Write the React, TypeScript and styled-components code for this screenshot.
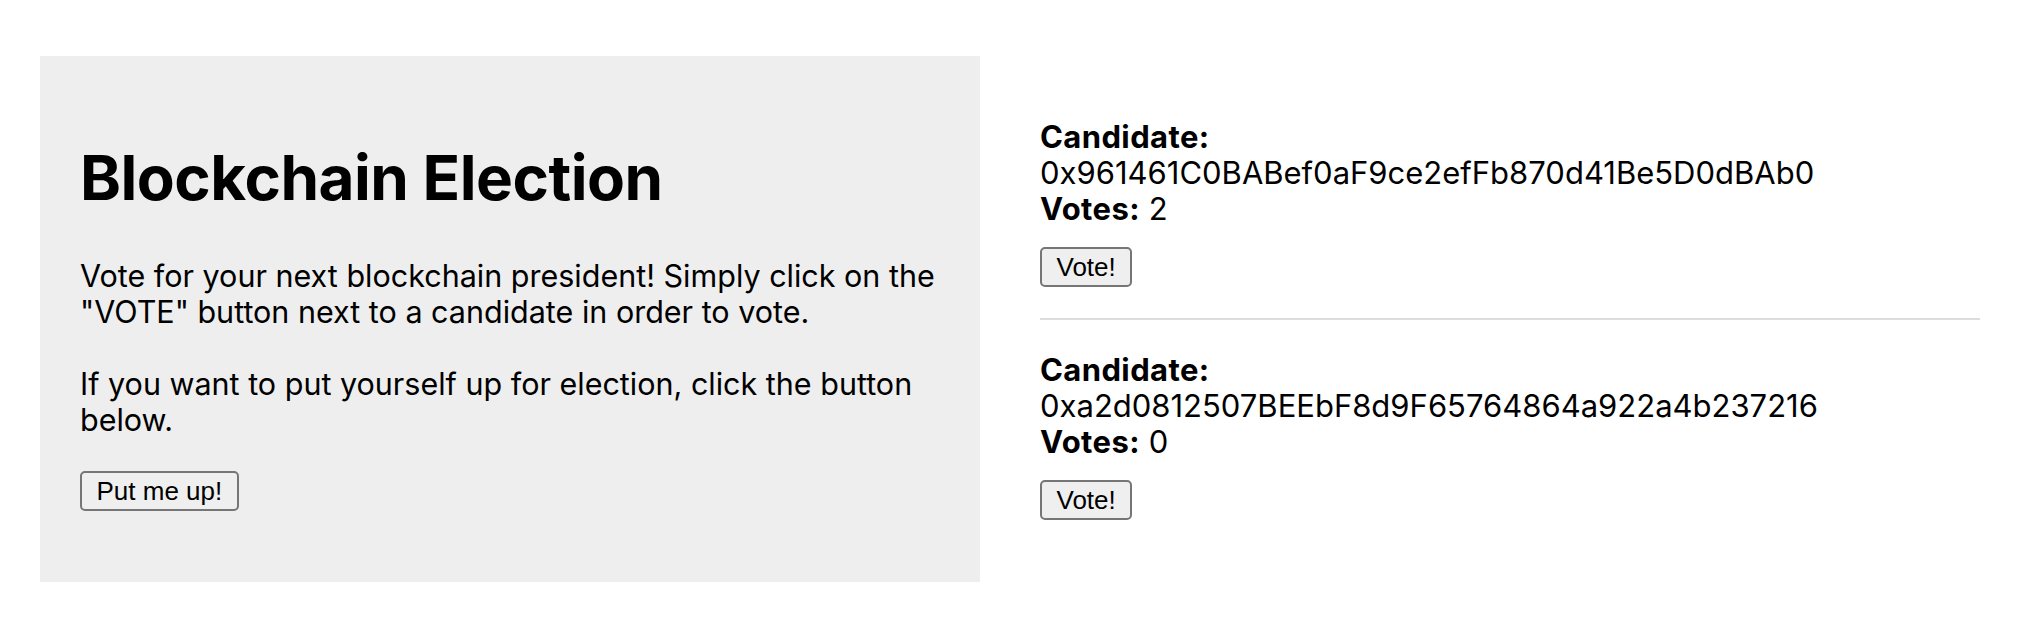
import React from "react";
import styled, { createGlobalStyle } from "styled-components";

const GlobalStyle = createGlobalStyle`
  html, body {
    margin: 0;
    padding: 0;
    background: #ffffff;
  }
  body {
    font-family: Inter, "Noto Sans", "Liberation Sans", sans-serif;
    color: #000;
  }
`;

const Page = styled.main`
  display: grid;
  grid-template-columns: 940px 940px;
  column-gap: 60px;
  align-items: start;
  padding: 56px 38px 0 40px;
`;

const Intro = styled.section`
  background: #eeeeee;
  height: 526px;
  box-sizing: border-box;
  padding: 86px 40px 0;
  display: flex;
  flex-direction: column;
  align-items: flex-start;
`;

const Title = styled.h1`
  margin: 0 0 44px;
  font-size: 62px;
  line-height: 72px;
  font-weight: 700;
  letter-spacing: -0.5px;
`;

const Text = styled.p<{ $gap?: number }>`
  margin: 0 0 ${(p) => p.$gap ?? 36}px;
  font-size: 30.5px;
  line-height: 36px;
  font-weight: 400;
`;

const Button = styled.button`
  font-family: "Liberation Sans", Arial, sans-serif;
  font-size: 26px;
  line-height: 30px;
  color: #000;
  background: #efefef;
  border: 2px solid #767676;
  border-radius: 5px;
  height: 40px;
  padding: 0 14.5px;
  cursor: pointer;
`;

const CandidateList = styled.section`
  display: flex;
  flex-direction: column;
  padding-top: 63px;
`;

const Candidate = styled.article`
  display: flex;
  flex-direction: column;
  align-items: flex-start;
`;

const Line = styled.div`
  font-size: 31px;
  line-height: 36px;
`;

const Label = styled.strong`
  font-weight: 700;
  letter-spacing: 0.4px;
`;

const VoteButton = styled(Button)`
  margin-top: 20px;
  padding: 0 14.5px;
`;

const Divider = styled.hr`
  width: 100%;
  margin: 31px 0 32px;
  border: 0;
  border-top: 2px solid #dddddd;
`;

const candidates = [
  { address: "0x961461C0BABef0aF9ce2efFb870d41Be5D0dBAb0", votes: 2 },
  { address: "0xa2d0812507BEEbF8d9F65764864a922a4b237216", votes: 0 },
];

export default function App() {
  return (
    <>
      <GlobalStyle />
      <Page>
        <Intro>
          <Title>Blockchain Election</Title>
          <Text>
            Vote for your next blockchain president! Simply click on the
            <br />
            "VOTE" button next to a candidate in order to vote.
          </Text>
          <Text $gap={33}>
            If you want to put yourself up for election, click the button
            <br />
            below.
          </Text>
          <Button>Put me up!</Button>
        </Intro>
        <CandidateList>
          {candidates.map((c, i) => (
            <React.Fragment key={c.address}>
              {i > 0 && <Divider />}
              <Candidate>
                <Line>
                  <Label>Candidate:</Label>
                </Line>
                <Line>{c.address}</Line>
                <Line>
                  <Label>Votes:</Label> {c.votes}
                </Line>
                <VoteButton>Vote!</VoteButton>
              </Candidate>
            </React.Fragment>
          ))}
        </CandidateList>
      </Page>
    </>
  );
}
